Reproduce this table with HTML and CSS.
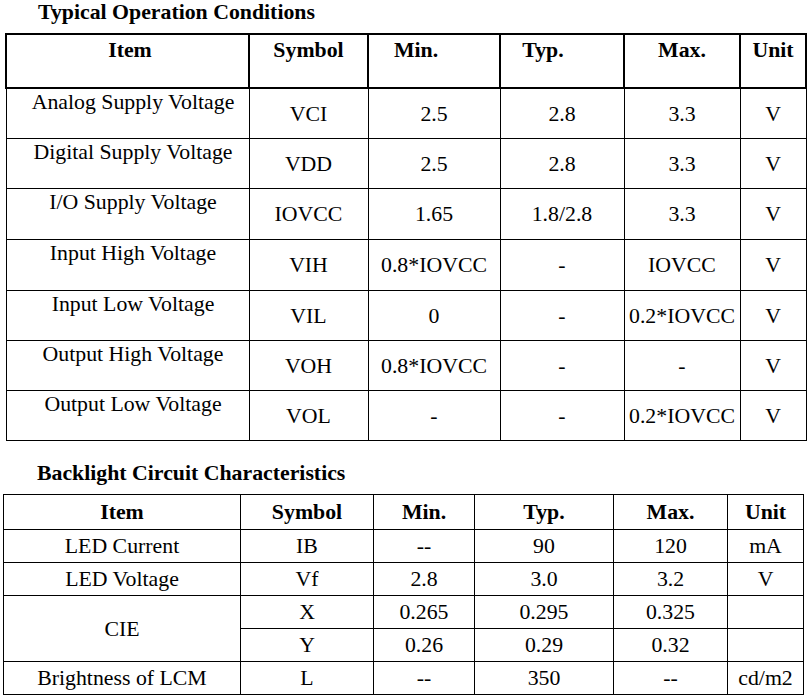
FILE: index.html
```html
<!DOCTYPE html>
<html>
<head>
<meta charset="utf-8">
<link rel="stylesheet" href="styles.css">
</head>
<body>
<h2 class="title t1">Typical Operation Conditions</h2>
<table class="tbl op">
  <colgroup>
    <col class="c1"><col class="c2"><col class="c3"><col class="c4"><col class="c5"><col class="c6">
  </colgroup>
  <thead>
    <tr>
      <th class="h-item">Item</th><th>Symbol</th><th class="h-min">Min.</th><th class="h-typ">Typ.</th><th>Max.</th><th>Unit</th>
    </tr>
  </thead>
  <tbody>
    <tr class="r1"><td class="item">Analog Supply Voltage</td><td>VCI</td><td>2.5</td><td>2.8</td><td>3.3</td><td>V</td></tr>
    <tr class="r50"><td class="item">Digital Supply Voltage</td><td>VDD</td><td>2.5</td><td>2.8</td><td>3.3</td><td>V</td></tr>
    <tr class="r51"><td class="item">I/O Supply Voltage</td><td>IOVCC</td><td>1.65</td><td>1.8/2.8</td><td>3.3</td><td>V</td></tr>
    <tr class="r51"><td class="item">Input High Voltage</td><td>VIH</td><td>0.8*IOVCC</td><td>-</td><td>IOVCC</td><td>V</td></tr>
    <tr class="r50"><td class="item">Input Low Voltage</td><td>VIL</td><td>0</td><td>-</td><td>0.2*IOVCC</td><td>V</td></tr>
    <tr class="r50"><td class="item">Output High Voltage</td><td>VOH</td><td>0.8*IOVCC</td><td>-</td><td>-</td><td>V</td></tr>
    <tr class="r50"><td class="item">Output Low Voltage</td><td>VOL</td><td>-</td><td>-</td><td>0.2*IOVCC</td><td>V</td></tr>
  </tbody>
</table>

<h2 class="title t2">Backlight Circuit Characteristics</h2>
<table class="tbl bl">
  <colgroup>
    <col class="d1"><col class="d2"><col class="d3"><col class="d4"><col class="d5"><col class="d6">
  </colgroup>
  <thead>
    <tr><th>Item</th><th>Symbol</th><th>Min.</th><th>Typ.</th><th>Max.</th><th>Unit</th></tr>
  </thead>
  <tbody>
    <tr><td>LED Current</td><td>IB</td><td>--</td><td>90</td><td>120</td><td>mA</td></tr>
    <tr><td>LED Voltage</td><td>Vf</td><td>2.8</td><td>3.0</td><td>3.2</td><td>V</td></tr>
    <tr><td rowspan="2">CIE</td><td>X</td><td>0.265</td><td>0.295</td><td>0.325</td><td></td></tr>
    <tr><td>Y</td><td>0.26</td><td>0.29</td><td>0.32</td><td></td></tr>
    <tr><td>Brightness of LCM</td><td>L</td><td>--</td><td>350</td><td>--</td><td>cd/m2</td></tr>
  </tbody>
</table>
</body>
</html>
```
FILE: styles.css
```css
html, body {
  margin: 0;
  padding: 0;
  background: #fff;
}
body {
  font-family: "Liberation Serif", "Times New Roman", serif;
  font-size: 21.8px;
  color: #000;
}
.title {
  font-size: 21.8px;
  font-weight: bold;
  line-height: 24px;
  margin: 0;
}
.t1 {
  padding-left: 38px;
  margin-bottom: 9px;
}
.t2 {
  padding-left: 37px;
  margin-top: 20px;
  margin-bottom: 9px;
}
.tbl {
  border-collapse: collapse;
  table-layout: fixed;
}
.tbl th, .tbl td {
  padding: 0;
  text-align: center;
  white-space: nowrap;
  line-height: 24px;
}
/* Table 1 */
.op {
  margin-left: 5px;
  width: 802px;
  border: 1px solid #000;
}
.op .c1 { width: 243px; }
.op .c2 { width: 119px; }
.op .c3 { width: 132px; }
.op .c4 { width: 124px; }
.op .c5 { width: 116px; }
.op .c6 { width: 66px; }
.op th {
  border: 2px solid #000;
  height: 49px;
  vertical-align: top;
  padding-top: 3px;
  font-weight: bold;
}
.op th.h-item { padding-left: 5px; }
.op th.h-min { padding-right: 36px; }
.op th.h-typ { padding-right: 38px; }
.op td {
  border: 1px solid #000;
  vertical-align: middle;
  padding-top: 0;
}
.op td.item {
  vertical-align: top;
  padding-top: 1px;
  padding-left: 11px;
}
.op tr.r1 td { height: 48px; }
.op tr.r51 td { height: 49px; }
.op tr.r50 td { height: 48px; }

/* Table 2 */
.bl {
  margin-left: 3px;
  width: 801px;
  border: 1px solid #000;
}
.bl .d1 { width: 237px; }
.bl .d2 { width: 133px; }
.bl .d3 { width: 101px; }
.bl .d4 { width: 139px; }
.bl .d5 { width: 114px; }
.bl .d6 { width: 76px; }
.bl th, .bl td {
  border: 1px solid #000;
  height: 32px;
  vertical-align: middle;
}
.bl th { font-weight: bold; height: 34px; }
```
